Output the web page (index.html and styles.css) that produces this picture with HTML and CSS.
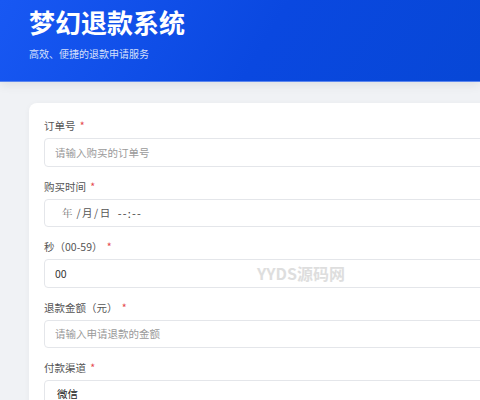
FILE: index.html
```html
<!DOCTYPE html>
<html lang="zh-CN">
<head>
<meta charset="utf-8">
<title>梦幻退款系统</title>
<link rel="stylesheet" href="styles.css">
</head>
<body>
<header class="hero">
  <h1 class="hero-title">梦幻退款系统</h1>
  <p class="hero-sub">高效、便捷的退款申请服务</p>
</header>
<main class="main">
  <form class="card">
    <div class="group">
      <label class="label">订单号 <span class="req">*</span></label>
      <input class="input" type="text" placeholder="请输入购买的订单号">
    </div>
    <div class="group">
      <label class="label">购买时间 <span class="req">*</span></label>
      <div class="input date"><span class="date-y">年</span><span class="date-md">/月/日</span><span class="date-t">--:--</span></div>
    </div>
    <div class="group">
      <label class="label">秒（00-59） <span class="req">*</span></label>
      <input class="input" type="text" value="00">
    </div>
    <div class="group">
      <label class="label">退款金额（元） <span class="req">*</span></label>
      <input class="input" type="text" placeholder="请输入申请退款的金额">
    </div>
    <div class="group">
      <label class="label">付款渠道 <span class="req">*</span></label>
      <div class="input select">微信</div>
    </div>
  </form>
</main>
<div class="watermark">YYDS源码网</div>
</body>
</html>
```

FILE: styles.css
```css
html, body {
  margin: 0;
  padding: 0;
  overflow: hidden;
}
body {
  background: #f0f2f5;
  font-family: "Noto Sans CJK SC", "Noto Sans", "Liberation Sans", sans-serif;
  color: #333;
  width: 480px;
  height: 400px;
  position: relative;
}
.hero {
  height: 82px;
  box-sizing: border-box;
  padding: 7px 0 0 29px;
  background: linear-gradient(120deg, #1858f3 0%, #0a48e0 55%, #0747d6 100%);
  border-bottom: 1px solid #5b86ee;
  box-shadow: 0 3px 10px rgba(0, 0, 0, 0.08);
  color: #fff;
}
.hero-title {
  margin: 0;
  font-size: 26px;
  line-height: 30px;
  font-weight: 700;
}
.hero-sub {
  margin: 10px 0 0;
  font-size: 10px;
  line-height: 14px;
  color: #d6e0fb;
}
.main {
  padding: 21px 0 0 29px;
}
.card {
  width: 560px;
  background: #fff;
  border-radius: 8px;
  padding: 13px 15px 20px;
  box-shadow: 0 1px 6px rgba(0, 0, 0, 0.04);
}
.group {
  margin-bottom: 10px;
}
.label {
  display: block;
  font-size: 10.5px;
  line-height: 20px;
  color: #555;
  margin-bottom: 2px;
}
.req {
  color: #e5484d;
  margin-left: 2px;
}
.input {
  display: block;
  box-sizing: border-box;
  width: 100%;
  height: 28.5px;
  border: 1px solid #e4e6ea;
  border-radius: 4px;
  padding: 0 10px;
  font-family: inherit;
  font-size: 10.5px;
  line-height: 26.5px;
  color: #333;
  background: #fff;
  outline: none;
}
.input::placeholder {
  color: #9a9a9a;
}
.date {
  display: flex;
  align-items: center;
  padding-left: 17px;
  color: #555;
}
.date-y {
  font-family: "Noto Serif CJK SC", "Liberation Serif", serif;
  color: #777;
}
.date-md {
  margin-left: 4px;
  letter-spacing: 1.5px;
}
.date-t {
  margin-left: 6px;
  font-size: 11px;
  letter-spacing: 1.2px;
  color: #444;
}
.select {
  padding-left: 12px;
  color: #222;
}
.watermark {
  position: absolute;
  left: 257px;
  top: 263px;
  font-size: 16px;
  line-height: 20px;
  font-weight: 700;
  color: #dedede;
  pointer-events: none;
}
```
